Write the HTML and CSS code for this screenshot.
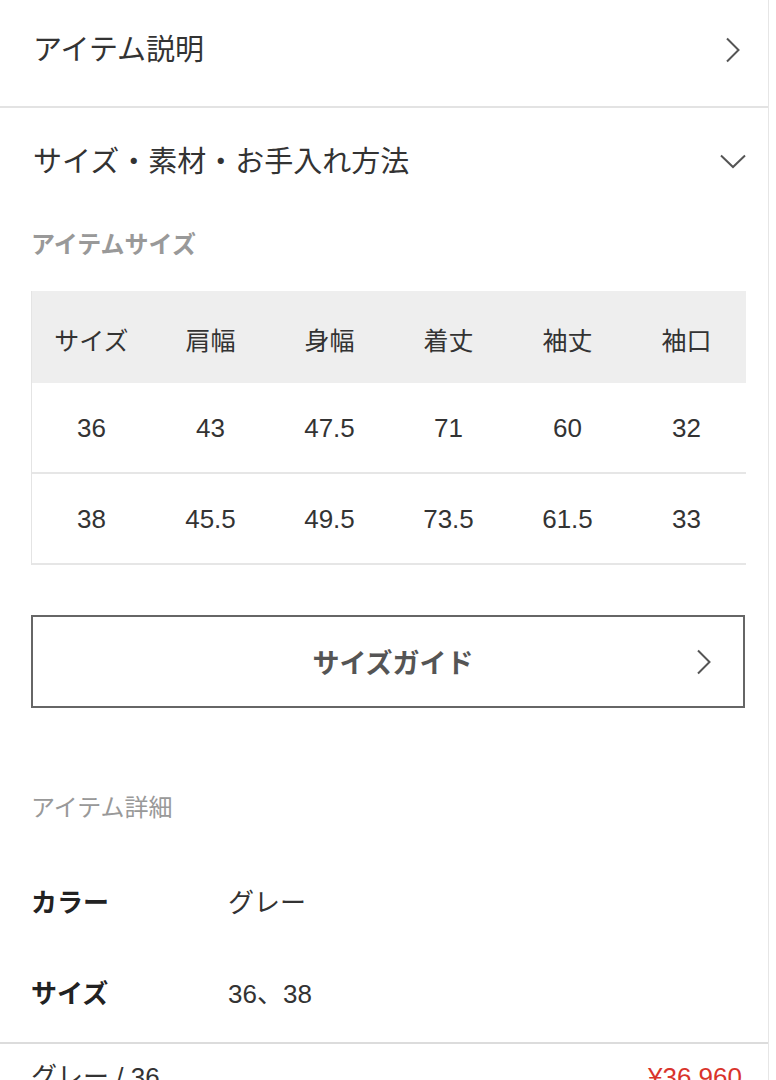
FILE: index.html
```html
<!DOCTYPE html>
<html lang="ja">
<head>
<meta charset="utf-8">
<title>アイテム</title>
<link rel="stylesheet" href="styles.css">
</head>
<body>
<div class="page">
  <div class="acc-row first">
    <span class="acc-title">アイテム説明</span>
    <span class="chev">
      <svg width="26" height="26" viewBox="0 0 26 26"><path d="M7 1.5 L18.5 13 L7 24.5" fill="none" stroke="#555" stroke-width="2"/></svg>
    </span>
  </div>
  <div class="acc-row second">
    <span class="acc-title">サイズ・素材・お手入れ方法</span>
    <span class="chev">
      <svg width="26" height="26" viewBox="0 0 26 26"><path d="M1 6.5 L13 18 L25 6.5" fill="none" stroke="#555" stroke-width="2"/></svg>
    </span>
  </div>

  <div class="section">
    <div class="label bold">アイテムサイズ</div>
    <div class="table">
      <div class="tr head">
        <div class="td">サイズ</div><div class="td">肩幅</div><div class="td">身幅</div><div class="td">着丈</div><div class="td">袖丈</div><div class="td">袖口</div>
      </div>
      <div class="tr">
        <div class="td">36</div><div class="td">43</div><div class="td">47.5</div><div class="td">71</div><div class="td">60</div><div class="td">32</div>
      </div>
      <div class="tr">
        <div class="td">38</div><div class="td">45.5</div><div class="td">49.5</div><div class="td">73.5</div><div class="td">61.5</div><div class="td">33</div>
      </div>
    </div>

    <div class="guide">
      <span class="guide-text">サイズガイド</span>
      <span class="guide-chev">
        <svg width="18" height="26" viewBox="0 0 18 26"><path d="M3 1.5 L14.5 13 L3 24.5" fill="none" stroke="#555" stroke-width="2"/></svg>
      </span>
    </div>

    <div class="label detail-label">アイテム詳細</div>
    <div class="detail">
      <div class="drow"><span class="dkey">カラー</span><span class="dval">グレー</span></div>
      <div class="drow"><span class="dkey">サイズ</span><span class="dval">36、38</span></div>
    </div>
  </div>

  <div class="variant">
    <span class="vname">グレー / 36</span>
    <span class="vprice">¥36,960</span>
  </div>
</div>
</body>
</html>
```

FILE: styles.css
```css
html, body {
  margin: 0;
  padding: 0;
  background: #fff;
}
body {
  font-family: "Liberation Sans", "Noto Sans CJK JP", sans-serif;
  color: #333;
}
.page {
  width: 768px;
  border-right: 1px solid #e6e6e6;
  min-height: 1080px;
  overflow: hidden;
}
.acc-row {
  display: flex;
  align-items: center;
  justify-content: space-between;
  padding: 0 22px 0 33px;
}
.acc-row.first {
  height: 100px;
  padding-bottom: 6px;
  border-bottom: 2px solid #e3e3e3;
}
.acc-row.second {
  height: 108px;
}
.acc-title {
  font-size: 29px;
  line-height: 40px;
  color: #333;
}
.chev {
  display: flex;
  width: 26px;
  height: 26px;
}
.section {
  padding: 0 23px 0 31px;
}
.label {
  font-size: 24px;
  line-height: 34px;
  color: #999;
}
.label.bold {
  font-weight: bold;
  margin-top: 12px;
}
.table {
  margin-top: 29px;
  width: 714px;
  border-left: 1px solid #e4e4e4;
}
.tr {
  display: grid;
  grid-template-columns: repeat(6, 1fr);
  height: 89px;
  border-bottom: 2px solid #e6e6e6;
}
.tr.head {
  height: 92px;
  background: #eeeeee;
  border-bottom: none;
}
.td {
  display: flex;
  align-items: center;
  justify-content: center;
  font-size: 26px;
  color: #333;
  padding-top: 2px;
}
.tr.head .td {
  font-size: 25px;
  padding-top: 4px;
}
.guide {
  margin-top: 50px;
  width: 710px;
  height: 89px;
  border: 2px solid #666;
  display: flex;
  align-items: center;
  justify-content: center;
  position: relative;
}
.guide-text {
  font-size: 27px;
  font-weight: bold;
  color: #555;
  margin-left: 10px;
}
.guide-chev {
  position: absolute;
  right: 30px;
  top: 32px;
  display: flex;
}
.detail-label {
  margin-top: 83px;
}
.detail {
  margin-top: 30px;
}
.drow {
  height: 91px;
  display: flex;
  align-items: center;
  font-size: 26px;
}
.dkey {
  width: 197px;
  font-weight: bold;
  color: #222;
}
.dval {
  color: #333;
}
.variant {
  margin-top: 5px;
  border-top: 2px solid #dcdcdc;
  display: flex;
  justify-content: space-between;
  padding: 16px 26px 0 31px;
  font-size: 26px;
  line-height: 34px;
}
.vname {
  color: #333;
}
.vprice {
  color: #d9342b;
}
```
